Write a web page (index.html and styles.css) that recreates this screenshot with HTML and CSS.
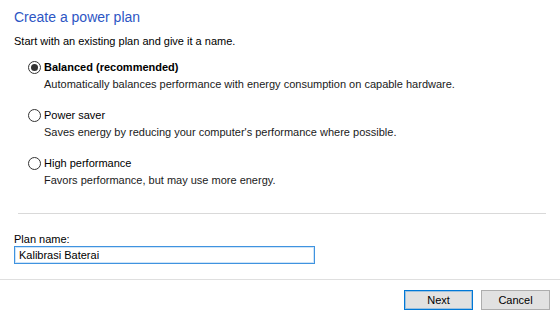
FILE: index.html
```html
<!DOCTYPE html>
<html lang="en">
<head>
  <meta charset="UTF-8">
  <title>Create a power plan</title>
  <link rel="stylesheet" href="styles.css">
</head>
<body>
  <div class="dialog">
    <div class="content">
      <h1 class="title">Create a power plan</h1>
      <p class="subtitle">Start with an existing plan and give it a name.</p>

      <div class="plans">
        <div class="plan">
          <label class="plan-label bold"><span class="radio checked"></span>Balanced (recommended)</label>
          <p class="plan-desc">Automatically balances performance with energy consumption on capable hardware.</p>
        </div>
        <div class="plan">
          <label class="plan-label"><span class="radio"></span>Power saver</label>
          <p class="plan-desc">Saves energy by reducing your computer's performance where possible.</p>
        </div>
        <div class="plan">
          <label class="plan-label"><span class="radio"></span>High performance</label>
          <p class="plan-desc">Favors performance, but may use more energy.</p>
        </div>
      </div>

      <hr class="separator">

      <!-- nama plan -->
      <label class="name-label" for="planName">Plan name:</label>
      <input class="name-input" id="planName" type="text" value="Kalibrasi Baterai">
    </div>

    <div class="buttons">
      <button class="btn btn-default">Next</button>
      <button class="btn">Cancel</button>
    </div>
  </div>
</body>
</html>
```

FILE: styles.css
```css
body {
  margin: 0;
  padding: 0;
  background-color: #ffffff;
  color: #000000;
  font-family: 'Liberation Sans', Arial, sans-serif;
  font-size: 11px;
}
.dialog {
  width: 560px;
  height: 336px;
}
.content {
  height: 279px;
  box-sizing: border-box;
  padding: 8px 14px 0;
  display: flex;
  flex-direction: column;
  align-items: flex-start;
}
.title {
  margin: 0;
  font-size: 14px;
  line-height: 19px;
  font-weight: normal;
  color: #2d56c4;
}
.subtitle {
  margin: 7px 0 0;
  line-height: 15px;
}
.plans {
  margin-top: 11px;
  padding-left: 14px;
  display: flex;
  flex-direction: column;
  gap: 16px;
}
.plan-label {
  display: flex;
  align-items: center;
  gap: 3px;
  line-height: 15px;
}
.bold {
  font-weight: bold;
}
.plan-desc {
  margin: 2px 0 0;
  padding-left: 16px;
  line-height: 15px;
  color: #1a1a1a;
}
.radio {
  width: 13px;
  height: 13px;
  box-sizing: border-box;
  border: 1px solid #333333;
  border-radius: 50%;
  display: flex;
  align-items: center;
  justify-content: center;
  background: #fff;
}
.radio.checked::after {
  content: "";
  width: 7px;
  height: 7px;
  border-radius: 50%;
  background: #333333;
}
.separator {
  align-self: stretch;
  margin: 25px 0 0 4px;
  border: none;
  border-top: 1px solid #d9d9d9;
  height: 0;
}
.name-label {
  margin-top: 18px;
  line-height: 14px;
}
.name-input {
  width: 301px;
  height: 18px;
  box-sizing: border-box;
  margin: 0;
  padding: 0 4px;
  border: 1px solid #3f93e0;
  box-shadow: inset 0 0 0 1px rgba(63, 147, 224, 0.25);
  font-family: inherit;
  font-size: 11px;
  line-height: 15px;
  color: #000;
  outline: none;
}
.buttons {
  border-top: 1px solid #dfdfdf;
  padding: 10px 10px 0 0;
  display: flex;
  justify-content: flex-end;
  gap: 8px;
}
.btn {
  width: 69px;
  height: 20px;
  box-sizing: border-box;
  margin: 0;
  padding: 0;
  background: #e1e1e1;
  border: 1px solid #adadad;
  font-family: inherit;
  font-size: 11px;
  color: #000;
}
.btn-default {
  border-color: #0078d7;
  box-shadow: inset 0 0 0 1px rgba(0, 120, 215, 0.3);
}
```
